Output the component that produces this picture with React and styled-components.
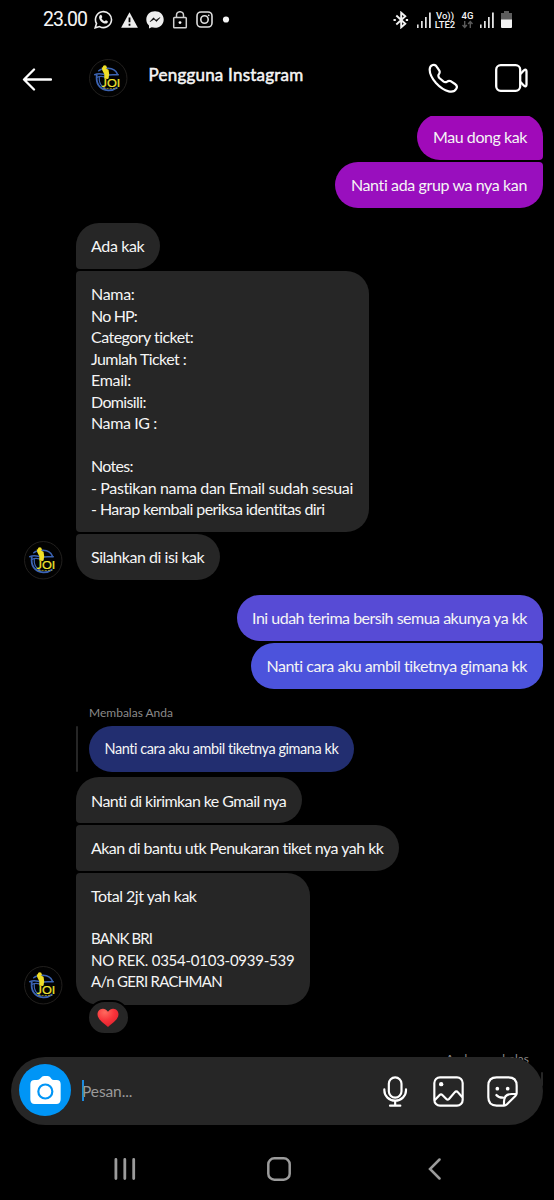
import styled, { createGlobalStyle } from 'styled-components'

const GlobalStyle = createGlobalStyle`
  *{
    box-sizing: border-box;
    margin: 0;
    padding: 0;
  }

  body{
    background: #000;
    font-family: Lato, "Liberation Sans", sans-serif;
  }

  svg{
    display: block;
    flex: none;
  }
`

const Screen = styled.main`
  width: 554px;
  height: 1200px;
  background: #000;
  color: #f5f5f5;
  display: flex;
  flex-direction: column;
  overflow: hidden;
`

const StatusBar = styled.div`
  height: 38px;
  flex: none;
  padding: 1px 42px 0 43px;
  display: flex;
  align-items: center;
  justify-content: space-between;
`

const StatusGroup = styled.div`
  display: flex;
  align-items: center;
  gap: ${(p) => p.$gap}px;
`

const Clock = styled.span`
  width: 44px;
  font-family: Roboto, sans-serif;
  font-size: 19.5px;
  letter-spacing: -1px;
  white-space: nowrap;
  margin-right: -1px;
`

const Network = styled.div`
  width: ${(p) => p.$width}px;
  display: flex;
  flex-direction: column;
  align-items: center;
  font-family: Roboto, sans-serif;
  font-size: 9.5px;
  font-weight: 500;
  line-height: 9px;
  white-space: nowrap;
`

const Header = styled.header`
  height: 78px;
  flex: none;
  padding: 2px 26px 0 22px;
  display: flex;
  align-items: center;
`

const BackArrow = styled.svg`
  margin-top: 1px;
`

const HeaderAvatar = styled.div`
  margin-left: 37px;
`

const Title = styled.h1`
  flex: 1;
  margin: -7px 0 0 21px;
  font-size: 17px;
  font-weight: 400;
  line-height: 22px;
  letter-spacing: 0.22px;
  -webkit-text-stroke: 0.5px #f5f5f5;
`

const HeaderActions = styled.div`
  display: flex;
  align-items: center;
  gap: 36px;
`

const Chat = styled.section`
  flex: 1;
  min-height: 0;
  overflow: hidden;
  padding: 0 11px 0 24px;
  display: flex;
  flex-direction: column;
`

const Group = styled.div`
  flex: none;
  display: flex;
  align-items: flex-end;
  justify-content: ${(p) => (p.$own ? 'flex-end' : 'flex-start')};
  gap: 13px;
  margin-top: ${(p) => p.$top}px;
`

const AvatarSlot = styled.div`
  width: 38.5px;
  flex: none;
`

const Stack = styled.div`
  display: flex;
  flex-direction: column;
  align-items: ${(p) => (p.$own ? 'flex-end' : 'flex-start')};
  gap: 2.1px;
`

const Bubble = styled.div`
  width: fit-content;
  padding: 12.2px 16px 12.1px 15.5px;
  background: ${(p) => p.$bg || '#262626'};
  border-radius: ${(p) => p.$radius};
  font-size: ${(p) => p.$size || 16}px;
`

const Line = styled.p`
  min-height: 21.5px;
  line-height: 21.5px;
  letter-spacing: ${(p) => p.$track}px;
  font-size: ${(p) => (p.$size ? `${p.$size}px` : 'inherit')};
  white-space: nowrap;
`

const ReplyLabel = styled.p`
  font-size: 12px;
  line-height: 16px;
  color: #8a8a8a;
  margin-left: ${(p) => p.$left || 0}px;
`

const Quote = styled.div`
  display: flex;
  align-items: stretch;
  gap: 11px;
  margin: 2.5px 0 3.5px;
`

const QuoteBar = styled.div`
  width: 2.5px;
  height: ${(p) => p.$height || 'auto'};
  border-radius: 2px;
  background: #262626;
`

const WithReaction = styled.div`
  position: relative;
`

const Reaction = styled.div`
  position: absolute;
  left: 11px;
  bottom: -30.5px;
  width: 43px;
  height: 35px;
  border: 2px solid #000;
  border-radius: 18px;
  background: #262626;
  display: flex;
  align-items: center;
  justify-content: center;
`

const OwnReply = styled.div`
  flex: none;
  margin-top: 46px;
  display: flex;
  flex-direction: column;
  align-items: flex-end;
  gap: 5px;
`

const OwnReplyLabel = styled(ReplyLabel)`
  margin-right: 14px;
`

const Composer = styled.div`
  position: relative;
  z-index: 1;
  flex: none;
  height: 68px;
  margin: -68px 11px 0;
  padding: 0 25px 0 8px;
  border-radius: 34px;
  background: #262626;
  display: flex;
  align-items: center;
`

const CameraButton = styled.div`
  width: 52px;
  height: 52px;
  margin-top: -2px;
  border-radius: 50%;
  background: #0095f6;
  display: flex;
  align-items: center;
  justify-content: center;
`

const Caret = styled.div`
  width: 2.5px;
  height: 21px;
  margin: -1px 0 0 10.5px;
  background: #1b8be0;
`

const Placeholder = styled.span`
  flex: 1;
  margin-left: -2px;
  font-size: 15.5px;
  line-height: 20px;
  letter-spacing: -0.1px;
  color: #9a9a9a;
`

const ComposerActions = styled.div`
  display: flex;
  align-items: center;
  gap: 23px;
`

const NavBar = styled.nav`
  height: 75px;
  flex: none;
  padding: 13px 113px 0 114px;
  display: flex;
  align-items: center;
  justify-content: space-between;
`

const HomeKey = styled.svg`
  margin-right: 6px;
`

const LEFT_FIRST = '23px 23px 23px 4px'
const LEFT_MID = '4px 23px 23px 4px'
const LEFT_LAST = '4px 23px 23px 23px'
const RIGHT_FIRST = '23px 23px 4px 23px'
const RIGHT_LAST = '23px 4px 23px 23px'

// [text, letter-spacing, font-size]
const form = [
  ['Nama:', -0.3],
  ['No HP:', -0.83],
  ['Category ticket:', -0.53],
  ['Jumlah Ticket :', -0.57],
  ['Email:', -0.28],
  ['Domisili:', -0.64],
  ['Nama IG :', -0.38],
  ['', 0],
  ['Notes:', -0.67],
  ['- Pastikan nama dan Email sudah sesuai', -0.36],
  ['- Harap kembali periksa identitas diri', -0.58],
]

const payment = [
  ['Total 2jt yah kak', -0.49],
  ['', 0],
  ['BANK BRI', -0.9, 15],
  ['NO REK. 0354-0103-0939-539', -0.25, 15],
  ['A/n GERI RACHMAN', -0.69, 15],
]

function Message({ lines, radius, bg, size }) {
  return (
    <Bubble $radius={radius} $bg={bg} $size={size}>
      {lines.map(([text, track, lineSize], index) => (
        <Line key={index} $track={track} $size={lineSize}>{text}</Line>
      ))}
    </Bubble>
  )
}

function Avatar() {
  return (
    <svg width="38.5" height="38.5" viewBox="-19.25 -19.25 38.5 38.5">
      <circle r="18.7" fill="#020202" stroke="#2b2826" strokeWidth="0.8" />
      <g fill="none" stroke="#3c64b4" strokeLinecap="round">
        <path d="M-11.5 -3C-12.5 5 -9 11.5 0 12.2C4 12.3 6.5 11 8.5 9.5" strokeWidth="1.8" />
        <path d="M-9 -1C-9.5 5 -7.5 8 -3 10" strokeWidth="1.2" />
        <path d="M-13.5 -3.5C-9 -6 -6 -4 -2 -3.5C3 -3 6 -4 10 -3.5" strokeWidth="1.5" />
        <path d="M-9.5 -7.5C-6 -10.5 6 -12 9 -4.5" strokeWidth="1.5" />
        <path d="M-11 -1C-7 -3 -4 -1 0 -1" strokeWidth="1.3" />
      </g>
      <g fill="#f0df28">
        <circle cx="-3.5" cy="-11" r="2" />
        <path d="M-6.5 -11L-3 -10L0.3 -8.5L1 -3.5L0 0.8L-4 0.5L-3.9 -4L-6 -8Z" />
      </g>
      <text x="-6.5" y="8.3" fill="#f3e632" fontFamily="Lato, sans-serif" fontSize="12" stroke="#f3e632" strokeWidth="0.2" textLength="18.5" lengthAdjust="spacingAndGlyphs">JOI</text>
      <path d="M-5 10.2H9" stroke="#a89e2c" strokeWidth="0.8" strokeDasharray="2.2 1" />
    </svg>
  )
}

function Signal() {
  return (
    <svg width="14" height="16" viewBox="0 0 14 16" fill="#e4e4e4">
      <rect x="0" y="12.5" width="1.6" height="3.5" />
      <rect x="4" y="9" width="1.7" height="7" />
      <rect x="8" y="5" width="1.7" height="11" />
      <rect x="12" y="0.5" width="1.8" height="15.5" />
    </svg>
  )
}

function StatusLeft() {
  return (
    <StatusGroup $gap={8}>
      <Clock>23.00</Clock>
      <svg width="19" height="19" viewBox="0 0 19 19">
        <path d="M1.2 17.8L2.5 13.5A8 8 0 1 1 5.6 16.6Z" fill="none" stroke="#eee" strokeWidth="1.6" />
        <path d="M6.3 5.1C7 4.6 7.5 4.9 7.7 5.5L8.3 7C8.3 7.5 7.5 8 7.5 8.3C8.1 9.7 9.2 10.7 10.6 11.3C11 11.3 11.5 10.3 12 10.3L13.8 11.2C14.2 12.7 12.9 13.6 11.6 13.6C8 13.4 5.3 10.2 5.1 7.5C5.1 6.5 5.5 5.6 6.3 5.1Z" fill="#eee" />
      </svg>
      <svg width="17" height="16" viewBox="0 0 17 16">
        <path d="M8.5 0.3L16.9 15.8H0.1Z" fill="#eee" />
        <path d="M8.5 5.5V10.3M8.5 11.8V13.8" stroke="#000" strokeWidth="1.8" />
      </svg>
      <svg width="18" height="18" viewBox="0 0 18 18">
        <path d="M9 0.3C4 0.3 0.3 3.8 0.3 8.5C0.3 11 1.3 13.1 3 14.6V17.6L5.7 16.3C6.7 16.6 7.8 16.8 9 16.8C14 16.8 17.7 13.2 17.7 8.5C17.7 3.8 14 0.3 9 0.3Z" fill="#eee" />
        <path d="M4 10.7L7.5 6.8L10 9.2L14 6.5L10.5 10.6L8 8.2Z" fill="#000" stroke="#000" strokeWidth="0.5" />
      </svg>
      <svg width="16" height="18" viewBox="0 0 16 18" fill="none" stroke="#cfcfcf" strokeWidth="1.5">
        <rect x="1.7" y="6.5" width="12.6" height="10.2" rx="0.8" />
        <path d="M4.5 6.5V4A3.5 3.3 0 0 1 11.5 4V6.5" />
        <circle cx="8" cy="11.6" r="1.4" fill="#fff" stroke="none" />
      </svg>
      <svg width="17" height="17" viewBox="0 0 17 17" fill="none" stroke="#dedede" strokeWidth="1.6">
        <rect x="1" y="1" width="15" height="15" rx="4" />
        <circle cx="8.5" cy="8.5" r="3.7" />
        <circle cx="12.7" cy="4.3" r="0.9" fill="#dedede" stroke="none" />
      </svg>
      <svg width="12" height="7" viewBox="0 0 12 7">
        <circle cx="5" cy="3.5" r="3.1" fill="#f5f5f5" />
      </svg>
    </StatusGroup>
  )
}

function StatusRight() {
  return (
    <StatusGroup $gap={4}>
      <StatusGroup $gap={8}>
        <svg width="16" height="18" viewBox="0 0 16 18" fill="none" stroke="#f2f2f2" strokeWidth="1.9">
          <path d="M3.3 4.5L12.3 12.7L8.2 16.3V1.7L12.3 5.3L3.3 13.5" />
          <path d="M0.5 9H2.8M12.8 9H15.1" strokeWidth="2" />
        </svg>
        <StatusGroup $gap={3}>
          <Signal />
          <Network $width={22}>
            <span>Vo))</span>
            <span>LTE2</span>
          </Network>
          <Network $width={17}>
            <span>4G</span>
            <svg width="11" height="9" viewBox="0 0 11 9" fill="none" stroke="#5a5a5a" strokeWidth="1.4">
              <path d="M2.7 1V7.3M0.5 5L2.7 7.5L4.9 5M8.3 8V1.7M6.1 4L8.3 1.5L10.5 4" />
            </svg>
          </Network>
        </StatusGroup>
      </StatusGroup>
      <StatusGroup $gap={7}>
        <Signal />
        <svg width="11" height="17" viewBox="0 0 11 17">
          <path d="M3 0H8V2H11V9H0V2H3Z" fill="#5c5c5c" />
          <path d="M0 8.5H11V16A1 1 0 0 1 10 17H1A1 1 0 0 1 0 16Z" fill="#f2f2f2" />
        </svg>
      </StatusGroup>
    </StatusGroup>
  )
}

function App() {
  return (
    <>
      <GlobalStyle />
      <Screen>
        <StatusBar>
          <StatusLeft />
          <StatusRight />
        </StatusBar>

        <Header>
          <BackArrow width="30" height="24" viewBox="0 0 30 24" fill="none" stroke="#fff" strokeWidth="2.3" strokeLinecap="round" strokeLinejoin="round">
            <path d="M29 12.5H2.5M12 2.5L2 12.5L12 22.5" />
          </BackArrow>
          <HeaderAvatar>
            <Avatar />
          </HeaderAvatar>
          <Title>Pengguna Instagram</Title>
          <HeaderActions>
            <svg width="31" height="31" viewBox="0 0 93 93" fill="none" stroke="#fff" strokeWidth="6.5" strokeLinejoin="round">
              <path d="M14 6C20 4 25 8 28 14L34 23C37 28 35 31 32 35C30 38 31 41 34 45L46 55C50 58 53 58 57 56C61 53 65 53 69 55L81 63C87 67 88 72 85 77C80 86 71 87 62 85C49 82 35 72 24 60C13 47 5 32 5 20C5 13 8 8 14 6Z" />
            </svg>
            <svg width="33" height="28" viewBox="0 0 33 28" fill="none" stroke="#fff" strokeWidth="2.3" strokeLinejoin="round">
              <rect x="1.2" y="1.2" width="24" height="25.6" rx="4.5" />
              <path d="M25.5 10L29 6.3C30.5 5 31.5 5.5 31.5 7.5V20.5C31.5 22.5 30.5 23 29 21.7L25.5 18" />
            </svg>
          </HeaderActions>
        </Header>

        <Chat>
          <Group $own $top={-2}>
            <Stack $own>
              <Message lines={[['Mau dong kak', -0.43]]} bg="#a00ab9" radius={RIGHT_FIRST} />
              <Message lines={[['Nanti ada grup wa nya kan', -0.38]]} bg="#990fbe" radius={RIGHT_LAST} />
            </Stack>
          </Group>

          <Group $top={15.5}>
            <AvatarSlot>
              <Avatar />
            </AvatarSlot>
            <Stack>
              <Message lines={[['Ada kak', -0.36]]} radius={LEFT_FIRST} />
              <Message lines={form} radius={LEFT_MID} />
              <Message lines={[['Silahkan di isi kak', -0.46]]} radius={LEFT_LAST} />
            </Stack>
          </Group>

          <Group $own $top={15.5}>
            <Stack $own>
              <Message lines={[['Ini udah terima bersih semua akunya ya kk', -0.5]]} bg="#574bd5" radius={RIGHT_FIRST} />
              <Message lines={[['Nanti cara aku ambil tiketnya gimana kk', -0.43]]} bg="#4c53dc" radius={RIGHT_LAST} />
            </Stack>
          </Group>

          <Group $top={16.5}>
            <AvatarSlot>
              <Avatar />
            </AvatarSlot>
            <Stack>
              <ReplyLabel $left={13.5}>Membalas Anda</ReplyLabel>
              <Quote>
                <QuoteBar />
                <Message lines={[['Nanti cara aku ambil tiketnya gimana kk', -0.45]]} bg="#222e70" size={14.5} radius="23px" />
              </Quote>
              <Message lines={[['Nanti di kirimkan ke Gmail nya', -0.58]]} radius={LEFT_FIRST} />
              <Message lines={[['Akan di bantu utk Penukaran tiket nya yah kk', -0.53]]} radius={LEFT_MID} />
              <WithReaction>
                <Message lines={payment} radius={LEFT_LAST} />
                <Reaction>
                  <svg width="22" height="20" viewBox="0 0 22 20">
                    <defs>
                      <radialGradient id="heart" cx="0.35" cy="0.2" r="0.9">
                        <stop offset="0" stopColor="#ff6a5e" />
                        <stop offset="0.5" stopColor="#f8333a" />
                        <stop offset="1" stopColor="#d81f2c" />
                      </radialGradient>
                    </defs>
                    <path d="M11 3.8C9.5 1.3 7.5 0.6 5.7 0.7C2.6 0.9 0.5 3.2 0.5 6.2C0.5 11.5 7 15.5 11 19C15 15.5 21.5 11.5 21.5 6.2C21.5 3.2 19.4 0.9 16.3 0.7C14.5 0.6 12.5 1.3 11 3.8Z" fill="url(#heart)" />
                  </svg>
                </Reaction>
              </WithReaction>
            </Stack>
          </Group>

          <OwnReply>
            <OwnReplyLabel>Anda membalas</OwnReplyLabel>
            <QuoteBar $height="14px" />
          </OwnReply>
        </Chat>

        <Composer>
          <CameraButton>
            <svg width="31" height="28" viewBox="0 0 93 84">
              <path d="M33 5Q36 0 42 0H53Q59 0 62 5L64 8Q67 12 72 12H80Q92 12 92 25V70Q92 84 79 84H14Q1 84 1 70V25Q1 12 14 12H20Q26 12 29 9Z" fill="#fff" />
              <circle cx="46" cy="46.5" r="21" fill="none" stroke="#0095f6" strokeWidth="6.5" />
            </svg>
          </CameraButton>
          <Caret />
          <Placeholder>Pesan...</Placeholder>
          <ComposerActions>
            <svg width="30" height="31" viewBox="0 0 90 93" fill="none" stroke="#fff" strokeWidth="6.5" strokeLinecap="round">
              <rect x="26.5" y="4" width="38" height="61" rx="19" />
              <path d="M13 40V43C13 60 27 74 45.5 74C64 74 78 60 78 43V40M45.5 74V88M30 89H61" />
            </svg>
            <svg width="31" height="31" viewBox="0 0 93 93" fill="none" stroke="#fff" strokeWidth="6.5" strokeLinejoin="round">
              <rect x="4" y="4" width="85" height="85" rx="17" />
              <path d="M5 73L20 57Q24 53 28 57L40 69Q44 73 48 69L65 49Q70 43 75 49L88 64" />
              <circle cx="24.5" cy="24.5" r="6.5" fill="#fff" stroke="none" />
            </svg>
            <svg width="31" height="31" viewBox="0 0 93 93" fill="none" stroke="#fff" strokeWidth="6.5" strokeLinecap="round" strokeLinejoin="round">
              <path d="M51 89H29Q4 89 4 64V29Q4 4 29 4H64Q89 4 89 29V52Q89 56 85 60L60 85Q56 89 51 89V77Q51 54 74 54H88" />
              <path d="M28 57Q34 65 48 65" />
              <circle cx="31" cy="38" r="5.5" fill="#fff" stroke="none" />
              <circle cx="62" cy="38" r="5.5" fill="#fff" stroke="none" />
            </svg>
          </ComposerActions>
        </Composer>

        <NavBar>
          <svg width="22" height="22" viewBox="0 0 22 22" stroke="#9b9b9b" strokeWidth="2.8" strokeLinecap="round">
            <path d="M1.9 1.5V20.5M10.8 1.5V20.5M19.7 1.5V20.5" />
          </svg>
          <HomeKey width="24" height="24" viewBox="0 0 24 24" fill="none" stroke="#9b9b9b" strokeWidth="2.5">
            <rect x="1.3" y="1.3" width="21.4" height="21.4" rx="6" />
          </HomeKey>
          <svg width="13" height="22" viewBox="0 0 13 22" fill="none" stroke="#9b9b9b" strokeWidth="2.5" strokeLinecap="round">
            <path d="M11.5 1.5L2 11L11.5 20.5" />
          </svg>
        </NavBar>
      </Screen>
    </>
  )
}

export default App
